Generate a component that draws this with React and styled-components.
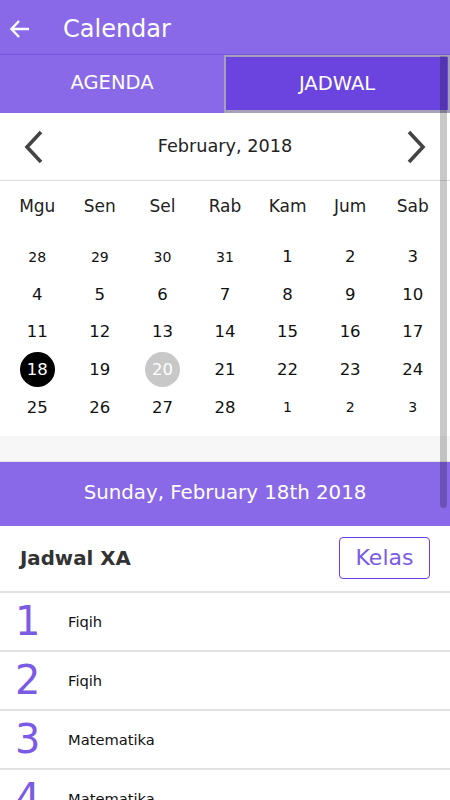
import React from "react";
import styled, { createGlobalStyle } from "styled-components";

const Global = createGlobalStyle`
  html, body { margin: 0; padding: 0; background: #fff; overflow: hidden; }
  body { font-family: "DejaVu Sans", "Liberation Sans", sans-serif; }
  * { box-sizing: border-box; }
`;

const Screen = styled.div`
  position: relative;
  width: 450px;
  height: 800px;
  overflow: hidden;
  background: #fff;
`;

const AppBar = styled.div`
  height: 55px;
  background: #8969e8;
  border-bottom: 1px solid #7656de;
  display: flex;
  align-items: center;
  padding: 3px 0 0 8px;
  gap: 31px;
  color: #fff;
`;

const Title = styled.div`
  font-size: 24px;
  color: #fff;
  line-height: 1;
`;

const Tabs = styled.div`
  height: 58px;
  display: grid;
  grid-template-columns: 224px 1fr;
  background: #8969e8;
`;

const Tab = styled.div`
  display: flex;
  align-items: center;
  justify-content: center;
  color: #fff;
  font-size: 19.5px;
  padding-bottom: ${(p) => (p.$active ? "1px" : "3px")};
  background: ${(p) => (p.$active ? "#6b44e0" : "#8969e8")};
  border: ${(p) => (p.$active ? "2px solid #a59fb8" : "none")};
  border-bottom-width: ${(p) => (p.$active ? "3px" : "0")};
`;

const Calendar = styled.div`
  background: #fff;
`;

const MonthNav = styled.div`
  height: 68px;
  display: flex;
  align-items: center;
  justify-content: space-between;
  padding: 0 22px 0 22px;
  border-bottom: 1px solid #dcdcdc;
`;

const MonthTitle = styled.div`
  font-size: 17.7px;
  color: #222;
  padding-bottom: 2px;
`;

const Grid = styled.div`
  display: grid;
  grid-template-columns: repeat(7, 1fr);
  padding: 0 6px;
`;

const WeekDay = styled.div`
  height: 50px;
  display: flex;
  align-items: center;
  justify-content: center;
  font-size: 17px;
  color: #222;
`;

const DaysGrid = styled(Grid)`
  grid-auto-rows: 37.6px;
  padding-top: 7px;
  padding-bottom: 10px;
`;

const DayCell = styled.div`
  display: flex;
  align-items: center;
  justify-content: center;
`;

const Day = styled.div`
  width: 35px;
  height: 35px;
  border-radius: 50%;
  display: flex;
  align-items: center;
  justify-content: center;
  font-size: ${(p) => (p.$other ? "14px" : "16.5px")};
  color: ${(p) => (p.$sel || p.$today ? "#fff" : "#111")};
  background: ${(p) => (p.$sel ? "#000" : p.$today ? "#c8c8c8" : "transparent")};
`;

const Footer = styled.div`
  height: 26px;
  background: #f7f7f7;
  border-bottom: 1px solid #e2e2e2;
`;

const DateBar = styled.div`
  height: 64px;
  background: #8969e8;
  color: #fff;
  font-size: 19.8px;
  display: flex;
  align-items: center;
  justify-content: center;
  padding-bottom: 2px;
`;

const SectionHead = styled.div`
  height: 67px;
  display: flex;
  align-items: center;
  justify-content: space-between;
  padding: 0 20px;
  border-bottom: 2px solid #e2e2e2;
`;

const SectionTitle = styled.div`
  font-weight: bold;
  font-size: 19.8px;
  color: #333;
`;

const KelasButton = styled.button`
  width: 91px;
  height: 42px;
  border: 1px solid #6a3de6;
  border-radius: 4px;
  background: #fff;
  color: #7b5be6;
  font-family: inherit;
  font-size: 22px;
  padding: 0 0 2px 0;
`;

const Row = styled.div`
  height: 59px;
  display: flex;
  align-items: center;
  border-bottom: 2px solid #e2e2e2;
  padding-left: 15px;
`;

const Num = styled.div`
  width: 53px;
  font-size: 40px;
  color: #7b5be6;
  line-height: 1;
`;

const Subject = styled.div`
  font-size: 14.7px;
  color: #111;
`;

const ScrollThumb = styled.div`
  position: absolute;
  right: 3px;
  top: 56px;
  width: 7px;
  height: 452px;
  background: rgba(0, 0, 0, 0.21);
  border-radius: 0 0 4px 4px;
`;

const Chevron = ({ dir }) => (
  <svg width="26" height="36" viewBox="0 0 26 36">
    <path
      d={dir === "left" ? "M19 3 L5 18 L19 33" : "M7 3 L21 18 L7 33"}
      fill="none"
      stroke="#444"
      strokeWidth="3.6"
    />
  </svg>
);

const BackArrow = () => (
  <svg width="24" height="24" viewBox="0 0 24 24">
    <path d="M21 12 H4 M11 4 L3.5 12 L11 20" fill="none" stroke="#fff" strokeWidth="2.4" />
  </svg>
);

const weekdays = ["Mgu", "Sen", "Sel", "Rab", "Kam", "Jum", "Sab"];

const days = [
  [28, true], [29, true], [30, true], [31, true], [1], [2], [3],
  [4], [5], [6], [7], [8], [9], [10],
  [11], [12], [13], [14], [15], [16], [17],
  [18], [19], [20], [21], [22], [23], [24],
  [25], [26], [27], [28], [1, true], [2, true], [3, true],
];

const schedule = ["Fiqih", "Fiqih", "Matematika", "Matematika"];

export default function App() {
  return (
    <Screen>
      <Global />
      <AppBar>
        <BackArrow />
        <Title>Calendar</Title>
      </AppBar>
      <Tabs>
        <Tab>AGENDA</Tab>
        <Tab $active>JADWAL</Tab>
      </Tabs>
      <Calendar>
        <MonthNav>
          <Chevron dir="left" />
          <MonthTitle>February, 2018</MonthTitle>
          <Chevron dir="right" />
        </MonthNav>
        <Grid>
          {weekdays.map((w) => (
            <WeekDay key={w}>{w}</WeekDay>
          ))}
        </Grid>
        <DaysGrid>
          {days.map(([d, other], i) => (
            <DayCell key={i}>
              <Day $other={other} $sel={!other && d === 18} $today={!other && d === 20}>
                {d}
              </Day>
            </DayCell>
          ))}
        </DaysGrid>
        <Footer />
      </Calendar>
      <DateBar>Sunday, February 18th 2018</DateBar>
      <SectionHead>
        <SectionTitle>Jadwal XA</SectionTitle>
        <KelasButton>Kelas</KelasButton>
      </SectionHead>
      {schedule.map((s, i) => (
        <Row key={i}>
          <Num>{i + 1}</Num>
          <Subject>{s}</Subject>
        </Row>
      ))}
      <ScrollThumb />
    </Screen>
  );
}
